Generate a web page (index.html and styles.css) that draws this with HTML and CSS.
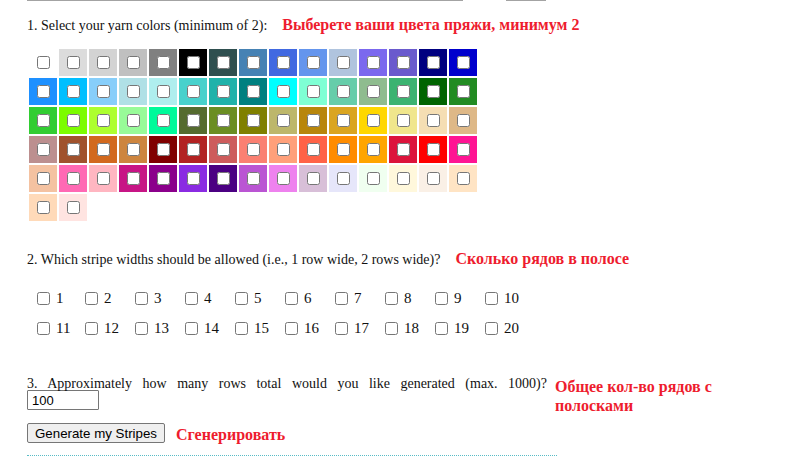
FILE: index.html
```html
<!DOCTYPE html>
<html>
<head>
<meta charset="utf-8">
<link rel="stylesheet" href="styles.css">
</head>
<body>
<div class="page">
  <div class="topline"><span class="seg seg-a"></span><span class="seg seg-b"></span></div>

  <div class="q q1">
    <span class="qtext">1. Select your yarn colors (minimum of 2):</span>
    <span class="note">Выберете ваши цвета пряжи, минимум 2</span>
  </div>

  <div class="swatches" id="swatches"></div>

  <div class="q q2">
    <span class="qtext">2. Which stripe widths should be allowed (i.e., 1 row wide, 2 rows wide)?</span>
    <span class="note">Сколько рядов в полосе</span>
  </div>

  <div class="widths" id="widths"></div>

  <div class="q q3">
    <div class="qtext q3-left">
      <span class="justify">3. Approximately how many rows total would you like generated (max. 1000)?</span>
      <input class="rows-input" type="text" value="100">
    </div>
    <span class="note note3">Общее кол-во рядов с полосками</span>
  </div>

  <div class="actions">
    <button class="gen">Generate my Stripes</button>
    <span class="note">Сгенерировать</span>
  </div>

  <div class="dotted"></div>
</div>
<script src="app.js"></script>
</body>
</html>
```

FILE: app.js
```js
var colors = [
  "#ffffff","#dcdcdc","#d3d3d3","#c0c0c0","#808080","#000000","#2f4f4f","#4682b4","#4169e1","#6495ed","#b0c4de","#7b68ee","#6a5acd","#000080","#0000cd",
  "#1e90ff","#00bfff","#87cefa","#b0e0e6","#afeeee","#48d1cc","#20b2aa","#008080","#00ffff","#7fffd4","#66cdaa","#8fbc8f","#3cb371","#006400","#228b22",
  "#32cd32","#7cfc00","#adff2f","#98fb98","#00fa9a","#556b2f","#6b8e23","#808000","#bdb76b","#b8860b","#daa520","#ffd700","#f0e68c","#f5deb3","#deb887",
  "#bc8f8f","#a0522d","#d2691e","#cd853f","#800000","#b22222","#cd5c5c","#fa8072","#ffa07a","#ff6347","#ff8c00","#ffa500","#dc143c","#ff0000","#ff1493",
  "#f4c2a1","#ff69b4","#ffb6c1","#c71585","#8b008b","#8a2be2","#4b0082","#ba55d3","#ee82ee","#d8bfd8","#e6e6fa","#f0fff0","#fff8dc","#faf0e6","#ffe4c4",
  "#ffdab9","#ffe4e1"
];
var sw = document.getElementById("swatches");
colors.forEach(function (c) {
  var d = document.createElement("label");
  d.className = "swatch";
  d.style.backgroundColor = c;
  var cb = document.createElement("input");
  cb.type = "checkbox";
  d.appendChild(cb);
  sw.appendChild(d);
});
var w = document.getElementById("widths");
for (var i = 1; i <= 20; i++) {
  var l = document.createElement("label");
  l.className = "width";
  var cb = document.createElement("input");
  cb.type = "checkbox";
  l.appendChild(cb);
  var s = document.createElement("span");
  s.textContent = i;
  l.appendChild(s);
  w.appendChild(l);
}
```

FILE: styles.css
```css
html, body {
  margin: 0;
  padding: 0;
  background: #ffffff;
}
body {
  font-family: "Liberation Serif", "DejaVu Serif", serif;
  color: #111111;
}
.page {
  padding-left: 27px;
  width: 700px;
}
.topline {
  display: flex;
  height: 2px;
}
.seg {
  display: block;
  height: 1px;
  background: #a3a3a3;
}
.seg-a { width: 436px; }
.seg-b { width: 40px; margin-left: 43px; }

.q {
  display: flex;
  align-items: baseline;
  font-size: 14px;
  line-height: 18px;
}
.note {
  color: #ee1c2e;
  font-weight: bold;
  font-size: 16px;
  line-height: 19px;
  margin-left: 15px;
}
.q1 { margin-top: 13px; }

.swatches {
  margin-top: 14px;
  margin-left: 2px;
  display: grid;
  grid-template-columns: repeat(15, 28px);
  grid-auto-rows: 27px;
  gap: 2px;
}
.swatch {
  display: flex;
  align-items: center;
  justify-content: center;
}
.swatch input {
  margin: 0 0 0 1px;
  width: 13px;
  height: 13px;
}

.q2 { margin-top: 28px; }

.widths {
  margin-top: 20px;
  margin-left: 8px;
  display: grid;
  grid-template-columns: repeat(10, 50px);
  row-gap: 12px;
}
.width {
  display: flex;
  align-items: center;
  font-size: 15px;
  line-height: 18px;
}
.width:nth-child(10n+1) {
  margin-left: 2px;
}
.width input {
  margin: 0 6px 0 0;
  width: 13px;
  height: 13px;
}

.q3 {
  margin-top: 38px;
  align-items: flex-start;
}
.q3-left {
  width: 520px;
}
.justify {
  display: block;
  text-align: justify;
  text-align-last: justify;
}
.rows-input {
  display: block;
  box-sizing: border-box;
  width: 72px;
  height: 20px;
  margin: -3px 0 0 0;
  padding: 1px 4px;
  border: 1px solid #767676;
  border-radius: 1px;
  font-family: "Liberation Sans", Arial, sans-serif;
  font-size: 13px;
  color: #000;
}
.note3 {
  width: 170px;
  margin-left: 8px;
  margin-top: 2px;
}

.actions {
  margin-top: 8px;
  display: flex;
  align-items: flex-start;
}
.gen {
  box-sizing: border-box;
  height: 20px;
  width: 138px;
  padding: 0 6px;
  border: 1px solid #767676;
  border-radius: 2px;
  background: #efefef;
  font-family: "Liberation Sans", Arial, sans-serif;
  font-size: 13.3px;
  color: #000;
}
.actions .note {
  margin-left: 11px;
  margin-top: 2px;
}
.dotted {
  margin-top: 11px;
  width: 530px;
  border-top: 1px dotted #58bcc6;
}
```
